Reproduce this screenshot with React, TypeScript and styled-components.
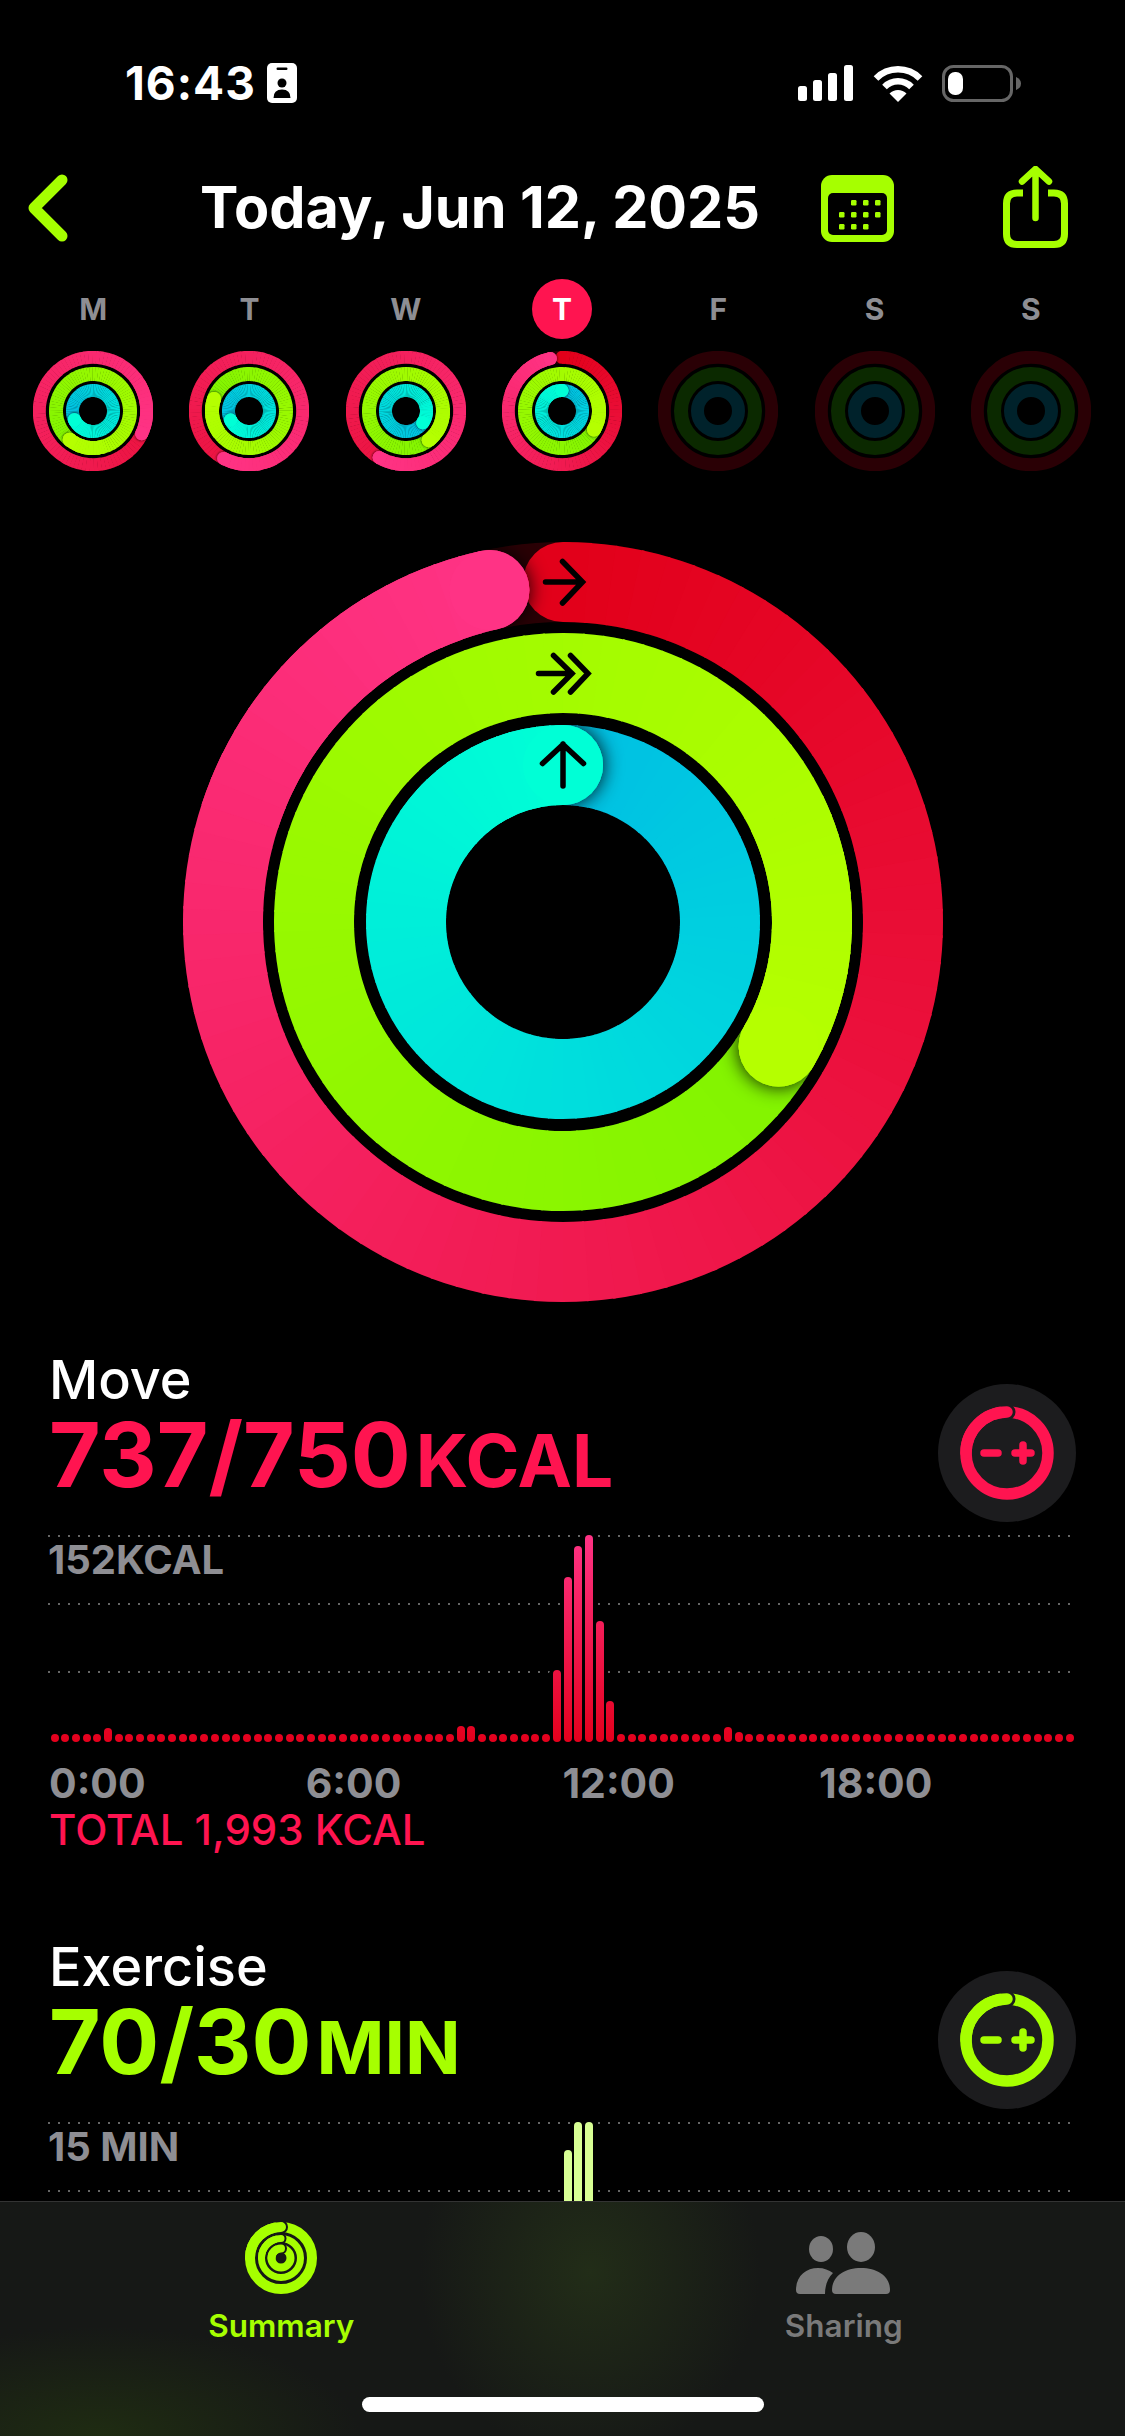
import React from 'react';
import styled, { createGlobalStyle } from 'styled-components';

const LIME = '#a6ff00';
const RED = '#ff1450';
const GREY = '#8e8e93';
const BAR_HEIGHT = 207;

const GlobalStyle = createGlobalStyle`
  html, body { margin: 0; padding: 0; background: #000; }
  body { font-family: Inter, "Liberation Sans", sans-serif; color: #fff; }
`;

const Screen = styled.div`
  position: relative;
  width: 1125px;
  height: 2436px;
  overflow: hidden;
  background: #000;
`;

const StatusBar = styled.div`
  height: 166px;
  display: flex;
  align-items: center;
  padding: 0 104px 0 125px;
  box-sizing: border-box;
`;

const Clock = styled.div`
  width: 130px;
  margin-right: 12px;
  font-size: 46px;
  font-weight: 700;
  line-height: 1;
  letter-spacing: 1px;
  white-space: nowrap;
`;

const StatusRight = styled.div`
  margin-left: auto;
  display: flex;
  align-items: center;
  gap: 19.5px;
`;

const Header = styled.div`
  height: 84px;
  display: flex;
  align-items: center;
  padding-left: 28px;
`;

const Title = styled.h1`
  margin: 0 64px 0 132px;
  width: 557px;
  font-size: 57.5px;
  font-weight: 700;
  line-height: 1;
  white-space: nowrap;
`;

const ShareSlot = styled.div`
  margin-left: 109px;
  margin-top: -2px;
  display: flex;
`;

const Week = styled.div`
  margin: 29px 16px 0 15px;
  display: grid;
  grid-template-columns: repeat(7, 1fr);
`;

const Day = styled.div`
  display: flex;
  flex-direction: column;
  align-items: center;
  gap: 12px;
`;

const DayLetter = styled.div<{ $today?: boolean }>`
  width: 60px;
  height: 60px;
  border-radius: 50%;
  display: flex;
  align-items: center;
  justify-content: center;
  font-size: 30px;
  font-weight: 700;
  color: ${p => (p.$today ? '#fff' : GREY)};
  background: ${p => (p.$today ? RED : 'transparent')};
`;

const BigRings = styled.div`
  margin: 71px 0 38px;
  display: flex;
  justify-content: center;
`;

const Section = styled.section`
  height: 587px;
  padding: 0 49px;
  box-sizing: border-box;
`;

const SectionHead = styled.div`
  height: 195px;
  display: flex;
  justify-content: space-between;
  align-items: flex-start;
`;

const Name = styled.div`
  margin-top: 13px;
  font-size: 54px;
  font-weight: 500;
  line-height: 54px;
`;

const Value = styled.div<{ $color: string }>`
  display: flex;
  align-items: baseline;
  color: ${p => p.$color};
  font-size: 89px;
  font-weight: 700;
  line-height: 96px;
  white-space: nowrap;
`;

const Unit = styled.span`
  margin-left: 5px;
  font-size: 73px;
  font-weight: 700;
`;

const RoundButton = styled.div`
  margin-top: 44px;
  width: 138px;
  height: 138px;
  border-radius: 50%;
  background: #1c1c1e;
  display: flex;
  align-items: center;
  justify-content: center;
`;

const Chart = styled.div`
  position: relative;
  height: ${BAR_HEIGHT}px;
  margin: 0 5px 0 -1px;
`;

const GridRow = styled.div`
  height: 68px;
  padding-top: 6px;
  box-sizing: border-box;
  background: repeating-linear-gradient(90deg, #666 0 2px, transparent 2px 10px) top left / 100% 2px no-repeat;
  color: ${GREY};
  font-size: 40px;
  font-weight: 700;
  line-height: 38px;
`;

const Bars = styled.div`
  position: absolute;
  left: 2.5px;
  bottom: 0;
  display: flex;
  align-items: flex-end;
  gap: 2.7px;
  filter: drop-shadow(4px 0 0 #000) drop-shadow(-4px 0 0 #000);
`;

const Bar = styled.div<{ $from: string; $to: string }>`
  width: 8px;
  border-radius: 4px;
  background: linear-gradient(to top, ${p => p.$from}, ${p => p.$to}) bottom / 100% ${BAR_HEIGHT}px no-repeat;
`;

const Axis = styled.div`
  margin-top: 18px;
  display: grid;
  grid-template-columns: repeat(4, 256.7px);
  color: ${GREY};
  font-size: 41px;
  font-weight: 700;
  line-height: 46px;
`;

const Total = styled.div`
  margin-top: 1px;
  color: ${RED};
  font-size: 42px;
  font-weight: 500;
  line-height: 46px;
  white-space: nowrap;
`;

const TabBar = styled.nav`
  position: absolute;
  left: 0;
  right: 0;
  bottom: 0;
  height: 235px;
  display: flex;
  border-top: 1px solid #333;
  box-sizing: border-box;
  background:
    radial-gradient(ellipse 170px 190px at 590px 70px, #222d18, transparent),
    radial-gradient(ellipse 260px 110px at 100px 235px, #1f2c12, transparent),
    #161816;
`;

const Tab = styled.div<{ $active?: boolean }>`
  width: 50%;
  padding-top: 20px;
  display: flex;
  flex-direction: column;
  align-items: center;
  color: ${p => (p.$active ? LIME : '#7a7a7a')};
  font-size: 31.500px;
  font-weight: 600;
`;

const TabIcon = styled.div`
  height: 72px;
  display: flex;
  align-items: flex-end;
`;

const TabLabel = styled.div`
  margin-top: 14px;
  line-height: 36px;
`;

const HomeIndicator = styled.div`
  position: absolute;
  left: 362px;
  bottom: 24px;
  width: 402px;
  height: 15px;
  border-radius: 8px;
  background: #fff;
`;

type Palette = { from: number[]; to: number[]; track: string };

const MOVE: Palette = { from: [226, 0, 26], to: [255, 51, 133], track: '#2a0005' };
const MOVE_LAP: Palette = { from: [236, 20, 66], to: [255, 51, 133], track: '#2a0005' };
const EXERCISE: Palette = { from: [130, 244, 0], to: [181, 255, 0], track: '#0b2900' };
const STAND: Palette = { from: [0, 191, 227], to: [0, 255, 214], track: '#00222b' };

function polar(c: number, r: number, deg: number) {
  const a = ((deg - 90) * Math.PI) / 180;
  return [c + r * Math.cos(a), c + r * Math.sin(a)];
}

function arc(c: number, r: number, from: number, to: number) {
  const [x0, y0] = polar(c, r, from);
  const [x1, y1] = polar(c, r, to);
  return `M${x0.toFixed(2)} ${y0.toFixed(2)}A${r} ${r} 0 ${to - from > 180 ? 1 : 0} 1 ${x1.toFixed(2)} ${y1.toFixed(2)}`;
}

function mix(p: Palette, t: number) {
  const v = p.from.map((f, i) => Math.round(f + (p.to[i] - f) * t));
  return `rgb(${v[0]},${v[1]},${v[2]})`;
}

function Ring(props: { id: string; c: number; r: number; w: number; deg: number; palette: Palette }) {
  const { id, c, r, w, deg, palette } = props;
  const start = Math.max(0, deg - 360);
  const span = deg - start;
  const step = 4;
  const segments: React.ReactNode[] = [];
  const tail: React.ReactNode[] = [];
  for (let a = start; a < deg; a += step) {
    const next = Math.min(a + step + 0.4, deg);
    const seg = (
      <path key={a} d={arc(c, r, a, next)} fill="none" stroke={mix(palette, (a - start) / span)} strokeWidth={w} />
    );
    segments.push(seg);
    if (deg - a < 60) tail.push(seg);
  }
  const [sx, sy] = polar(c, r, start);
  const [ex, ey] = polar(c, r, deg);
  return (
    <g>
      <defs>
        <mask id={`${id}-mask`} maskUnits="userSpaceOnUse" x="0" y="0" width={c * 2} height={c * 2}>
          <circle cx={c} cy={c} r={r} fill="none" stroke="#fff" strokeWidth={w} />
        </mask>
        <filter id={`${id}-shadow`} x="-60%" y="-60%" width="220%" height="220%">
          <feDropShadow dx="0" dy="0" stdDeviation={w * 0.12} floodColor="#000" floodOpacity="0.95" />
        </filter>
      </defs>
      <circle cx={c} cy={c} r={r} fill="none" stroke={palette.track} strokeWidth={w} />
      <circle cx={sx} cy={sy} r={w / 2} fill={mix(palette, 0)} />
      {segments}
      <g mask={`url(#${id}-mask)`}>
        <circle cx={ex} cy={ey} r={w / 2} fill={mix(palette, 1)} filter={`url(#${id}-shadow)`} />
      </g>
      {tail}
      <circle cx={ex} cy={ey} r={w / 2} fill={mix(palette, 1)} />
    </g>
  );
}

function TrackRing(props: { c: number; r: number; w: number; color: string }) {
  return <circle cx={props.c} cy={props.c} r={props.r} fill="none" stroke={props.color} strokeWidth={props.w} />;
}

type DayData = { letter: string; today?: boolean; rings?: number[] };

const DAYS: DayData[] = [
  { letter: 'M', rings: [475, 579, 605] },
  { letter: 'T', rings: [568, 649, 604] },
  { letter: 'W', rings: [570, 502, 485] },
  { letter: 'T', today: true, rings: [347.5, 840, 360] },
  { letter: 'F' },
  { letter: 'S' },
  { letter: 'S' },
];

function SmallRings({ id, rings }: { id: string; rings?: number[] }) {
  return (
    <svg width="120" height="120" viewBox="0 0 120 120">
      {rings ? (
        <>
          <Ring id={`${id}-a`} c={60} r={53.7} w={13} deg={rings[0]} palette={rings[0] > 360 ? MOVE_LAP : MOVE} />
          <Ring id={`${id}-b`} c={60} r={37} w={14} deg={rings[1]} palette={EXERCISE} />
          <Ring id={`${id}-c`} c={60} r={20.5} w={13} deg={rings[2]} palette={STAND} />
        </>
      ) : (
        <>
          <TrackRing c={60} r={53.7} w={13} color={MOVE.track} />
          <TrackRing c={60} r={37} w={14} color={EXERCISE.track} />
          <TrackRing c={60} r={20.5} w={13} color={STAND.track} />
        </>
      )}
    </svg>
  );
}

function MainRings() {
  // arrows are given relative to the ring box, centre at 380,380
  return (
    <svg width="760" height="760" viewBox="0 0 760 760">
      <Ring id="big-a" c={380} r={340} w={80} deg={347.5} palette={MOVE} />
      <Ring id="big-b" c={380} r={249} w={80} deg={840} palette={EXERCISE} />
      <Ring id="big-c" c={380} r={157} w={80} deg={360} palette={STAND} />
      <g fill="none" stroke="#000" strokeWidth="5.5" strokeLinecap="round" strokeLinejoin="miter">
        <path d="M362.5 40H399M379.5 19.500L399.5 40L379.5 61" />
        <path d="M355.500 131.500H389M370.500 113.500L389 131.500L370.500 150M387.500 113.500L405 131.500L387.500 150" />
        <path d="M380 202V244M359.500 221.500L380 202.500L400.500 221.500" />
      </g>
    </svg>
  );
}

function BackIcon() {
  return (
    <svg width="40" height="68" viewBox="0 0 40 68">
      <path d="M34 6L6 34L34 62" fill="none" stroke={LIME} strokeWidth="11" strokeLinecap="round" strokeLinejoin="round" />
    </svg>
  );
}

function CalendarIcon() {
  const dots = [
    [30, 25], [42, 25], [54, 25],
    [18, 37], [30, 37], [42, 37], [54, 37],
    [18, 49], [30, 49], [42, 49],
  ];
  return (
    <svg width="73" height="67" viewBox="0 0 73 67">
      <rect width="73" height="67" rx="11" fill={LIME} />
      <rect x="7" y="18" width="59" height="42" rx="5" fill="#000" />
      {dots.map(([x, y]) => (
        <rect key={`${x}-${y}`} x={x} y={y} width="5.500" height="5.500" rx="1.200" fill={LIME} />
      ))}
    </svg>
  );
}

function ShareIcon() {
  return (
    <svg width="65" height="82" viewBox="0 0 65 82">
      <g fill="none" stroke={LIME} strokeLinecap="round">
        <path d="M20 27H14Q3.500 27 3.500 37.500V68Q3.500 78.500 14 78.500H51Q61.500 78.500 61.500 68V37.500Q61.500 27 51 27H45" strokeWidth="7" strokeLinecap="butt" />
        <path d="M32.500 52V4M19 15.500L32.500 3L46 15.500" strokeWidth="6.500" />
      </g>
    </svg>
  );
}

function BadgeIcon() {
  return (
    <svg width="30" height="40" viewBox="0 0 30 40">
      <rect width="30" height="40" rx="5" fill="#fff" />
      <rect x="9.500" y="4.500" width="11" height="2.500" rx="1.200" fill="#000" />
      <circle cx="15" cy="20" r="4.500" fill="#000" />
      <path d="M6.500 35Q6.500 26.500 15 26.500T23.500 35Z" fill="#000" />
    </svg>
  );
}

function SignalIcon() {
  return (
    <svg width="55" height="36" viewBox="0 0 55 36">
      <g fill="#fff">
        <rect x="0" y="21" width="9" height="15" rx="2.500" />
        <rect x="15" y="15" width="9" height="21" rx="2.500" />
        <rect x="30" y="8" width="9" height="28" rx="2.500" />
        <rect x="46" y="0" width="9" height="36" rx="2.500" />
      </g>
    </svg>
  );
}

function WifiIcon() {
  return (
    <svg width="50" height="37" viewBox="0 0 50 37">
      <path d="M3 13.500A31 31 0 0 1 47 13.500" fill="none" stroke="#fff" strokeWidth="6.500" />
      <path d="M11.500 22A19 19 0 0 1 38.500 22" fill="none" stroke="#fff" strokeWidth="6.500" />
      <path d="M25 37L16.500 28.500A12 12 0 0 1 33.500 28.500Z" fill="#fff" />
    </svg>
  );
}

function BatteryIcon() {
  return (
    <svg width="79" height="37" viewBox="0 0 79 37">
      <rect x="1.500" y="1.500" width="68" height="34" rx="10" fill="none" stroke="#666" strokeWidth="3" />
      <rect x="6" y="7" width="15" height="23" rx="7" fill="#fff" />
      <path d="M74 12Q79 14 79 18.500T74 25Z" fill="#666" />
    </svg>
  );
}

function GoalIcon({ color }: { color: string }) {
  return (
    <svg width="94" height="94" viewBox="0 0 94 94">
      <g fill="none" stroke={color}>
        <circle cx="47" cy="47" r="41" strokeWidth="11.500" />
        <circle cx="47" cy="6" r="8.500" fill="#1c1c1e" stroke="none" />
        <path d={arc(47, 41, 270, 360)} strokeWidth="11.500" strokeLinecap="round" />
        <path d="M24 47H38M55 47H71M63 39V55" strokeWidth="7.500" strokeLinecap="round" />
      </g>
    </svg>
  );
}

function SummaryIcon() {
  const bands = [
    { r: 31, w: 10 },
    { r: 19.5, w: 7 },
    { r: 9.5, w: 8 },
  ];
  return (
    <svg width="72" height="72" viewBox="0 0 72 72">
      <g fill="none" stroke={LIME}>
        {bands.map(b => (
          <g key={b.r}>
            <circle cx="36" cy="36" r={b.r} strokeWidth={b.w} />
            <circle cx="36" cy={36 - b.r} r={b.w / 2 + 2} fill="#161816" stroke="none" />
            <path d={arc(36, b.r, 270, 360)} strokeWidth={b.w} strokeLinecap="round" />
          </g>
        ))}
      </g>
    </svg>
  );
}

function SharingIcon() {
  return (
    <svg width="96" height="62" viewBox="0 0 96 62">
      <g fill="#7a7a7a">
        <ellipse cx="25" cy="17" rx="12" ry="13" />
        <ellipse cx="65" cy="15" rx="14" ry="15" />
        <path d="M0 58C0 44 10 36 22 36C28 36 33 38 37 41C32 46 29 53 29 62H4Q0 62 0 58Z" />
        <path d="M36 58C36 44 49 36 65 36C81 36 94 44 94 58Q94 62 90 62H40Q36 62 36 58Z" />
      </g>
    </svg>
  );
}

const MOVE_BARS: Record<number, number> = {
  5: 14, 38: 16, 39: 16, 47: 72, 48: 165, 49: 196, 50: 207, 51: 121, 52: 41, 63: 15, 64: 10,
};
const EXERCISE_BARS: Record<number, number> = { 48: 179, 49: 207, 50: 207 };

function MetricSection(props: {
  name: string;
  value: string;
  unit: string;
  color: string;
  scale: string;
  total?: string;
  bars: Record<number, number>;
  from: string;
  to: string;
}) {
  const { name, value, unit, color, scale, total, bars, from, to } = props;
  return (
    <Section>
      <SectionHead>
        <div>
          <Name>{name}</Name>
          <Value $color={color}>
            {value}
            <Unit>{unit}</Unit>
          </Value>
        </div>
        <RoundButton>
          <GoalIcon color={color} />
        </RoundButton>
      </SectionHead>
      <Chart>
        <GridRow>{scale}</GridRow>
        <GridRow />
        <GridRow />
        <Bars>
          {Array.from({ length: 96 }, (_, i) => (
            <Bar key={i} $from={from} $to={to} style={{ height: bars[i] ?? 8 }} />
          ))}
        </Bars>
      </Chart>
      <Axis>
        <span>0:00</span>
        <span>6:00</span>
        <span>12:00</span>
        <span>18:00</span>
      </Axis>
      {total && <Total>{total}</Total>}
    </Section>
  );
}

export default function App() {
  return (
    <Screen>
      <GlobalStyle />
      <StatusBar>
        <Clock>16:43</Clock>
        <BadgeIcon />
        <StatusRight>
          <SignalIcon />
          <WifiIcon />
          <BatteryIcon />
        </StatusRight>
      </StatusBar>
      <Header>
        <BackIcon />
        <Title>Today, Jun 12, 2025</Title>
        <CalendarIcon />
        <ShareSlot>
          <ShareIcon />
        </ShareSlot>
      </Header>
      <Week>
        {DAYS.map((d, i) => (
          <Day key={i}>
            <DayLetter $today={d.today}>{d.letter}</DayLetter>
            <SmallRings id={`day${i}`} rings={d.rings} />
          </Day>
        ))}
      </Week>
      <BigRings>
        <MainRings />
      </BigRings>
      <MetricSection
        name="Move"
        value="737/750"
        unit="KCAL"
        color={RED}
        scale="152KCAL"
        total="TOTAL 1,993 KCAL"
        bars={MOVE_BARS}
        from="#e4001c"
        to="#ff3385"
      />
      <MetricSection
        name="Exercise"
        value="70/30"
        unit="MIN"
        color={LIME}
        scale="15 MIN"
        bars={EXERCISE_BARS}
        from="#d8ff94"
        to="#d8ff94"
      />
      <TabBar>
        <Tab $active>
          <TabIcon>
            <SummaryIcon />
          </TabIcon>
          <TabLabel>Summary</TabLabel>
        </Tab>
        <Tab>
          <TabIcon>
            <SharingIcon />
          </TabIcon>
          <TabLabel>Sharing</TabLabel>
        </Tab>
      </TabBar>
      <HomeIndicator />
    </Screen>
  );
}
